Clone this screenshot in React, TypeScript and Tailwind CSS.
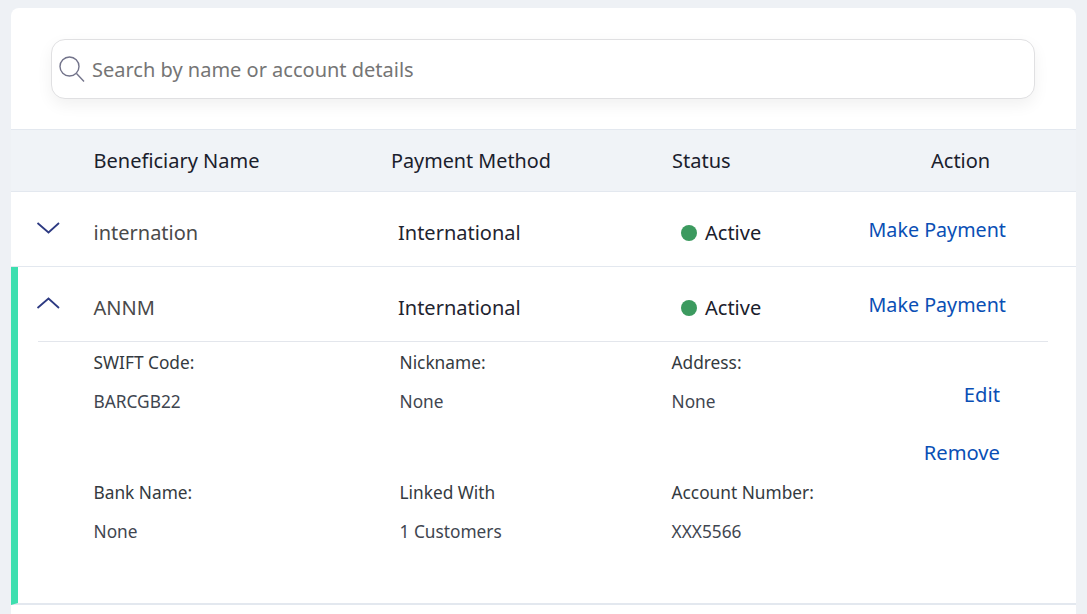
const FONT = "font-['Noto_Sans',sans-serif]";

function Chevron({ up }: { up?: boolean }) {
  return (
    <svg width="24" height="12" viewBox="0 0 24 12" fill="none" stroke="#2d3a82" strokeWidth="1.8">
      <path d={up ? "M1.5 11 L12.5 1.5 L23 11" : "M1.5 1 L12.5 10.5 L23 1"} />
    </svg>
  );
}

function Field({ label, value }: { label: string; value: string }) {
  return (
    <div className="flex flex-col">
      <div className="h-[20px] text-[17.3px] leading-[20px] text-[#343a40]">{label}</div>
      <div className="mt-[19px] h-[20px] text-[17.3px] leading-[20px] text-[#3f4650]">{value}</div>
    </div>
  );
}

function Row({ name, up }: { name: string; up?: boolean }) {
  return (
    <div className="grid h-[74px] grid-cols-[82.5px_304.5px_283px_188px_1fr]">
      <div className="flex items-start justify-start pl-[25px] pt-[30px]">
        <Chevron up={up} />
      </div>
      <div className="pt-[28px] text-[20px] leading-[26px] text-[#4a4a4a]">{name}</div>
      <div className="pt-[28px] text-[20px] leading-[26px] text-[#1f2430]">International</div>
      <div className="flex items-start gap-[8px] pt-[28px]">
        <span className="mt-[5px] h-[16px] w-[16px] rounded-full bg-[#3c9a5f]" />
        <span className="text-[20px] leading-[26px] text-[#1a202c]">Active</span>
      </div>
      <div className="-ml-[0.5px] pt-[25px] text-[19.7px] leading-[26px] text-[#0a4fb5]">Make Payment</div>
    </div>
  );
}

export default function App() {
  return (
    <div className={`h-[614px] overflow-hidden bg-[#eef1f5] pl-[11px] pr-[11px] pt-[8px] ${FONT}`}>
      <div className="h-[606px] rounded-t-lg bg-white">
        <div className="h-[121px] pl-[40px] pr-[41px] pt-[31px]">
          <div className="flex h-[60px] items-center rounded-[14px] border border-[#e0e0e2] bg-white pl-[6px] shadow-[0_6px_16px_rgba(0,0,0,0.06)]">
            <svg width="27" height="28" viewBox="0 0 27 28" fill="none" stroke="#72738a" strokeWidth="1.4">
              <circle cx="11.5" cy="11.5" r="9.5" />
              <path d="M18.5 18.5 L26 26.5" />
            </svg>
            <span className="ml-[7px] pt-[2px] text-[20px] text-[#757575]">Search by name or account details</span>
          </div>
        </div>
        <div className="grid h-[63px] grid-cols-[82.5px_297.5px_281px_259px_1fr] items-center border-y border-[#e3e8ef] bg-[#f0f3f7] text-[20px] text-[#1a202c]">
          <div />
          <div>Beneficiary Name</div>
          <div className="text-[19.8px]">Payment Method</div>
          <div>Status</div>
          <div>Action</div>
        </div>
        <div className="border-b border-[#e3e8ef]">
          <Row name="internation" />
        </div>
        <div className="h-[338px] border-b-2 border-[#e3e8ef] border-l-[7px] border-l-[#3ddfaf]">
          <div className="-ml-[7px]">
            <Row name="ANNM" up />
          </div>
          <div className="ml-[20px] mr-[28px] border-t border-[#e3e6ec]">
            <div className="grid grid-cols-[55.5px_1fr] pt-[11px]">
              <div />
              <div className="grid grid-cols-[306px_272px_1fr]">
                <div className="flex flex-col gap-[71px]">
                  <Field label="SWIFT Code:" value="BARCGB22" />
                  <Field label="Bank Name:" value="None" />
                </div>
                <div className="flex flex-col gap-[71px]">
                  <Field label="Nickname:" value="None" />
                  <Field label="Linked With" value="1 Customers" />
                </div>
                <div className="grid grid-cols-[1fr_auto]">
                  <div className="flex flex-col gap-[71px]">
                    <Field label="Address:" value="None" />
                    <Field label="Account Number:" value="XXX5566" />
                  </div>
                  <div className="flex flex-col items-end pr-[48px] pt-[28px] text-[20.2px] leading-[26px] text-[#0a4fb5]">
                    <span>Edit</span>
                    <span className="mt-[32px]">Remove</span>
                  </div>
                </div>
              </div>
            </div>
          </div>
        </div>
      </div>
    </div>
  );
}
